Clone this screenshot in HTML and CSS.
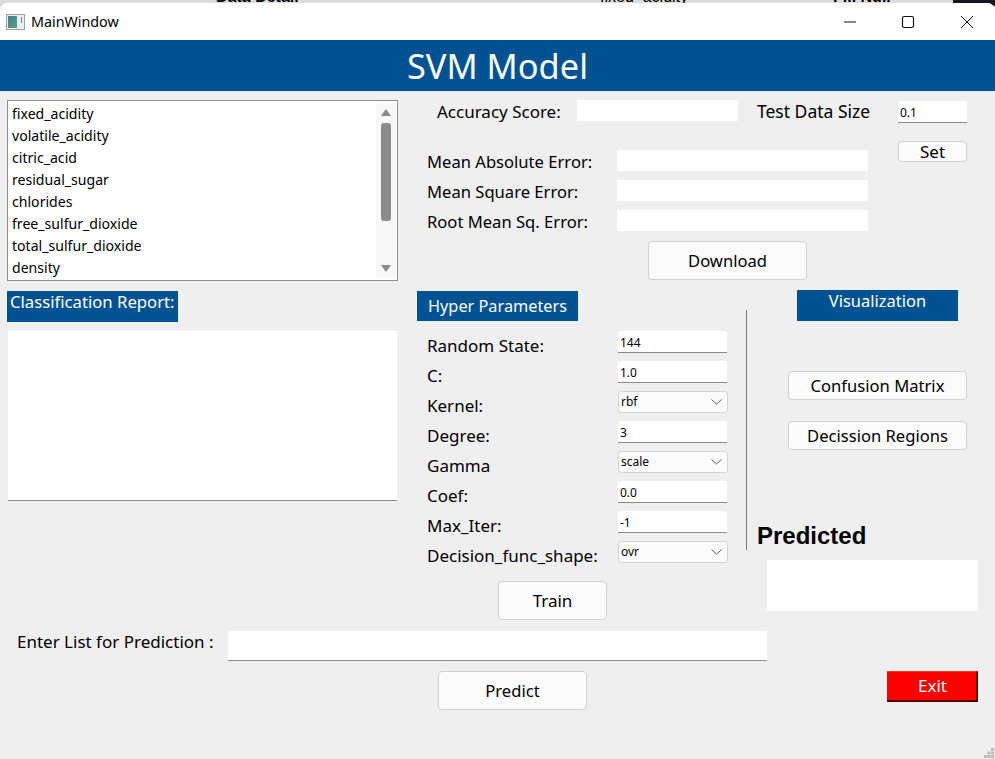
FILE: index.html
```html
<!DOCTYPE html>
<html lang="en">

<head>
    <meta charset="UTF-8">
    <meta name="viewport" content="width=device-width, initial-scale=1.0">
    <title>MainWindow</title>
    <link rel="stylesheet" href="styles.css">
</head>

<body>
    <div class="behind">
        <span class="behind-a">Data Detail</span>
        <span class="behind-b">fixed_acidity</span>
        <span class="behind-c">Fill Null</span>
        <span class="behind-corner"></span>
    </div>
    <div class="window">
        <div class="titlebar">
            <svg class="app-icon" width="19" height="16" viewBox="0 0 19 16">
                <defs>
                    <linearGradient id="appfill" x1="0" y1="0" x2="1" y2="1">
                        <stop offset="0" stop-color="#3f7f9c"/>
                        <stop offset="1" stop-color="#5fa070"/>
                    </linearGradient>
                </defs>
                <rect x="0.5" y="0.5" width="18" height="15" fill="#eceff0" stroke="#9aa2a8"/>
                <rect x="2" y="2" width="9" height="12" fill="url(#appfill)"/>
                <rect x="15" y="3" width="1" height="6" fill="#66888f"/>
            </svg>
            <span class="title-text">MainWindow</span>
            <svg class="win-btn" width="14" height="14" viewBox="0 0 14 14"><path d="M1 7H13" stroke="#111" fill="none"/></svg>
            <svg class="win-btn" width="14" height="14" viewBox="0 0 14 14"><rect x="1.5" y="1.5" width="11" height="11" rx="1.5" stroke="#111" fill="none" stroke-width="1.2"/></svg>
            <svg class="win-btn close-btn" width="14" height="14" viewBox="0 0 14 14"><path d="M1 1L13 13M13 1L1 13" stroke="#111" fill="none"/></svg>
        </div>
        <div class="header">SVM Model</div>

        <div class="top">
            <div class="listbox">
                <ul class="columns">
                    <li>fixed_acidity</li>
                    <li>volatile_acidity</li>
                    <li>citric_acid</li>
                    <li>residual_sugar</li>
                    <li>chlorides</li>
                    <li>free_sulfur_dioxide</li>
                    <li>total_sulfur_dioxide</li>
                    <li>density</li>
                </ul>
                <div class="scrollbar">
                    <span class="arrow-up"></span>
                    <span class="thumb"></span>
                    <span class="arrow-down"></span>
                </div>
            </div>
            <div class="metrics">
                <div class="score-row">
                    <span class="label score-label">Accuracy Score:</span>
                    <div class="output score-out"></div>
                    <span class="label size-label">Test Data Size</span>
                    <div class="field size-field">0.1</div>
                </div>
                <div class="error-wrap">
                    <div class="errors">
                        <div class="error-row"><span class="label">Mean Absolute Error:</span><div class="output"></div></div>
                        <div class="error-row"><span class="label">Mean Square Error:</span><div class="output"></div></div>
                        <div class="error-row"><span class="label">Root Mean Sq. Error:</span><div class="output"></div></div>
                    </div>
                    <button class="btn set-btn">Set</button>
                </div>
                <button class="btn download-btn">Download</button>
            </div>
        </div>

        <div class="middle">
            <div class="report">
                <div class="tag report-tag">Classification Report:</div>
                <div class="report-box"></div>
            </div>
            <div class="hyper">
                <div class="tag hyper-tag">Hyper Parameters</div>
                <div class="params">
                    <span class="label">Random State:</span><div class="field">144</div>
                    <span class="label">C:</span><div class="field">1.0</div>
                    <span class="label">Kernel:</span><div class="combo">rbf<svg width="11" height="6" viewBox="0 0 11 6"><path d="M0.5 0.5L5.5 5L10.5 0.5" fill="none" stroke="#555"/></svg></div>
                    <span class="label">Degree:</span><div class="field">3</div>
                    <span class="label">Gamma</span><div class="combo">scale<svg width="11" height="6" viewBox="0 0 11 6"><path d="M0.5 0.5L5.5 5L10.5 0.5" fill="none" stroke="#555"/></svg></div>
                    <span class="label">Coef:</span><div class="field">0.0</div>
                    <span class="label">Max_Iter:</span><div class="field">-1</div>
                    <span class="label">Decision_func_shape:</span><div class="combo">ovr<svg width="11" height="6" viewBox="0 0 11 6"><path d="M0.5 0.5L5.5 5L10.5 0.5" fill="none" stroke="#555"/></svg></div>
                </div>
                <button class="btn train-btn">Train</button>
            </div>
            <div class="divider"></div>
            <div class="viz">
                <div class="tag viz-tag">Visualization</div>
                <button class="btn viz-btn first">Confusion Matrix</button>
                <button class="btn viz-btn">Decission Regions</button>
                <div class="predicted">Predicted</div>
                <div class="output predicted-out"></div>
            </div>
        </div>

        <div class="enter-row">
            <span class="label">Enter List for Prediction :</span>
            <div class="enter-field"></div>
        </div>
        <div class="bottom-row">
            <button class="btn predict-btn">Predict</button>
            <button class="exit-btn">Exit</button>
        </div>
        <svg class="grip" width="10" height="10" viewBox="0 0 10 10">
            <rect x="7" y="0" width="3" height="3" fill="#bbb"/>
            <rect x="3.500" y="3.500" width="3" height="3" fill="#bbb"/>
            <rect x="7" y="3.500" width="3" height="3" fill="#bbb"/>
            <rect x="0" y="7" width="3" height="3" fill="#bbb"/>
            <rect x="3.500" y="7" width="3" height="3" fill="#bbb"/>
            <rect x="7" y="7" width="3" height="3" fill="#bbb"/>
        </svg>
    </div>
</body>
</html>
```

FILE: styles.css
```css
*{
    box-sizing: border-box;
}
html, body{
    margin: 0;
    height: 100%;
    overflow: hidden;
}
body{
    position: relative;
    width: 995px;
    height: 759px;
    background: #dcdcdc;
    font-family: "Noto Sans", "Open Sans", sans-serif;
    color: #000;
}
.behind{
    position: absolute;
    top: -12px;
    left: 0;
    width: 100%;
    font-family: "Liberation Sans", sans-serif;
    font-size: 16px;
    line-height: 18px;
    font-weight: bold;
}
.behind span{
    position: absolute;
    top: 0;
}
.behind-a{
    left: 216px;
}
.behind-b{
    left: 600px;
    font-weight: normal;
}
.behind-c{
    left: 833px;
}
.behind span.behind-corner{
    top: 0;
    left: 953px;
    width: 42px;
    height: 18px;
    background: #15161c;
}
.window{
    position: absolute;
    top: 3px;
    left: 0;
    width: 995px;
    height: 756px;
    background: #efefef;
    border-radius: 8px 8px 0 0;
    overflow: hidden;
}
.titlebar{
    height: 37px;
    background: #fff;
    display: flex;
    align-items: center;
    padding: 0 21px 0 6px;
}
.app-icon{
    margin-right: 6px;
}
.title-text{
    font-size: 14.3px;
    margin-right: auto;
}
.win-btn{
    margin-left: 44px;
}
.close-btn{
    margin-left: 45px;
}
.header{
    height: 51px;
    background: #005293;
    color: #fff;
    font-size: 34.4px;
    line-height: 51px;
    text-align: center;
}
.label{
    font-size: 16.8px;
    white-space: nowrap;
}
.top{
    display: flex;
    padding: 9px 0 0 7px;
    height: 199px;
}
.listbox{
    width: 391px;
    height: 181px;
    background: #fff;
    border: 1px solid #8a8f98;
    display: flex;
    flex: none;
}
.columns{
    list-style: none;
    margin: 0;
    padding: 2px 0 0 4px;
    flex: 1;
    font-size: 14.1px;
}
.columns li{
    height: 22px;
    line-height: 22px;
}
.scrollbar{
    width: 20px;
    background: #f8f8f8;
    display: flex;
    flex-direction: column;
    align-items: center;
    padding: 6px 0;
    margin: 2px 1px 2px 0;
}
.arrow-up{
    width: 0;
    height: 0;
    border-left: 5px solid transparent;
    border-right: 5px solid transparent;
    border-bottom: 7px solid #8a8a8a;
}
.thumb{
    width: 10px;
    height: 98px;
    background: #8a8a8a;
    border-radius: 3px;
    margin-top: 7px;
}
.arrow-down{
    width: 0;
    height: 0;
    border-left: 5px solid transparent;
    border-right: 5px solid transparent;
    border-top: 7px solid #8a8a8a;
    margin-top: auto;
}
.metrics{
    margin-left: 29px;
    flex: 1;
}
.score-row{
    display: flex;
    align-items: flex-start;
    height: 22px;
}
.score-label{
    margin-left: 10px;
    width: 140px;
    font-size: 17px;
    line-height: 23px;
}
.output{
    background: #fff;
}
.score-out{
    width: 161px;
    height: 21px;
}
.size-label{
    margin-left: 19px;
    width: 141px;
    font-size: 17.5px;
    line-height: 23px;
}
.size-field{
    width: 69px;
    margin-top: 1px;
}
.field{
    height: 22px;
    background: #fff;
    border-bottom: 1px solid #8a8a8a;
    border-radius: 2px 2px 0 0;
    font-size: 12px;
    line-height: 23px;
    padding-left: 2px;
}
.error-wrap{
    display: flex;
    align-items: flex-start;
    margin-top: 19px;
}
.errors{
    display: flex;
    flex-direction: column;
    gap: 9px;
    margin-top: 9px;
}
.error-row{
    display: flex;
    align-items: center;
    height: 21px;
}
.error-row .label{
    width: 190px;
    font-size: 16.6px;
    padding-top: 2px;
}
.error-row .output{
    width: 251px;
    height: 21px;
}
.btn{
    background: #fbfbfb;
    border: 1px solid #d0d0d0;
    border-radius: 4px;
    font-family: inherit;
    font-size: 16.6px;
    color: #000;
    padding: 0;
}
.set-btn{
    width: 69px;
    height: 21px;
    margin-left: 30px;
    font-size: 17px;
    line-height: 19px;
}
.download-btn{
    display: block;
    width: 159px;
    height: 39px;
    margin: 10px 0 0 221px;
}
.middle{
    display: flex;
    height: 341px;
    padding-left: 7px;
}
.tag{
    background: #005293;
    color: #fff;
    font-size: 16.5px;
}
.report{
    width: 391px;
    flex: none;
    padding-top: 1px;
}
.report-tag{
    width: 171px;
    height: 31px;
    line-height: 22px;
    padding-left: 3px;
    font-size: 16.7px;
}
.report-box{
    height: 170px;
    margin: 9px 1px 0;
    background: #fff;
    border-bottom: 1px solid #8a8a8a;
}
.hyper{
    margin-left: 19px;
    width: 311px;
    flex: none;
}
.hyper-tag{
    width: 161px;
    height: 30px;
    line-height: 30px;
    padding-left: 11px;
    margin-top: 1px;
    font-size: 16.3px;
}
.params{
    display: grid;
    grid-template-columns: 201px 109px;
    grid-auto-rows: 22px;
    row-gap: 8px;
    align-items: center;
    margin-top: 10px;
}
.params .label{
    margin-left: 10px;
    font-size: 17px;
    line-height: 22px;
    padding-top: 7px;
}
.combo{
    height: 22px;
    width: 110px;
    background: #fbfbfb;
    border: 1px solid #d4d4d4;
    border-radius: 3px;
    font-size: 12px;
    line-height: 20px;
    padding: 0 5px 0 2px;
    display: flex;
    align-items: center;
    justify-content: space-between;
}
.train-btn{
    display: block;
    width: 109px;
    height: 39px;
    margin: 18px 0 0 81px;
    font-size: 17px;
}
.divider{
    width: 1px;
    height: 240px;
    background: #777;
    margin: 20px 0 0 18px;
    flex: none;
}
.viz{
    flex: 1;
}
.viz-tag{
    width: 161px;
    height: 31px;
    line-height: 22px;
    text-align: center;
    margin: 0 0 0 50px;
}
.viz-btn{
    display: block;
    width: 179px;
    height: 29px;
    margin: 21px 0 0 41px;
}
.viz-btn.first{
    margin-top: 50px;
}
.predicted{
    font-size: 24px;
    font-weight: bold;
    line-height: 32px;
    margin: 70px 0 0 10px;
    font-family: "Liberation Sans", sans-serif;
}
.predicted-out{
    width: 211px;
    height: 51px;
    margin: 8px 0 0 20px;
}
.enter-row{
    display: flex;
    align-items: flex-start;
    height: 30px;
    padding-left: 17px;
}
.enter-row .label{
    width: 211px;
    font-size: 17px;
    line-height: 21px;
}
.enter-field{
    width: 539px;
    height: 30px;
    background: #fff;
    border-bottom: 1px solid #8a8a8a;
}
.bottom-row{
    position: relative;
    display: flex;
    align-items: flex-start;
    margin-top: 10px;
    padding-left: 438px;
}
.predict-btn{
    width: 149px;
    height: 39px;
}
.exit-btn{
    width: 91px;
    height: 31px;
    margin-left: 300px;
    padding: 0 0 1px 2px;
    background: #f00;
    color: #fff;
    border: 0;
    border-top: 1px solid #ff3030;
    border-right: 2px solid #500;
    border-bottom: 2px solid #500;
    font-family: inherit;
    font-size: 17px;
}
.grip{
    position: absolute;
    right: 1px;
    bottom: 1px;
}
```
